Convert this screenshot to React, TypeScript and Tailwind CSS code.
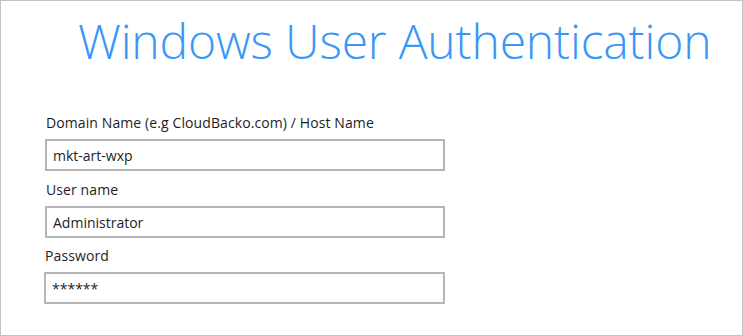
export default function App() {
  const fields = [
    { label: "Domain Name (e.g CloudBacko.com) / Host Name", value: "mkt-art-wxp", gap: "", shift: "" },
    { label: "User name", value: "Administrator", gap: "mt-[9px]", shift: "" },
    { label: "Password", value: "******", gap: "mt-[8px]", shift: "-ml-[1px]" },
  ];

  return (
    <div
      className="w-[743px] h-[336px] bg-white border border-[#c3c3c3] text-[#1e1e1e] overflow-hidden"
      style={{ fontFamily: '"Open Sans", "Noto Sans", sans-serif' }}
    >
      <h1 className="pl-[77px] pt-[12px] text-[48px] font-light leading-[56px] tracking-[-0.15px] text-[#3a97f5] whitespace-nowrap">
        Windows User Authentication
      </h1>

      <div className="pl-[44px] pt-[44px] w-[444px] flex flex-col">
        {fields.map((f, i) => (
          <div key={i} className={`${f.gap} ${f.shift}`}>
            <div className="pl-[1px] text-[14px] leading-[20px] tracking-[0.1px]">{f.label}</div>
            <div className="mt-[6px] h-[32px] border-2 border-[#b5b5b5] px-[6px] flex items-center text-[14px]">
              {f.value}
            </div>
          </div>
        ))}
      </div>
    </div>
  );
}
